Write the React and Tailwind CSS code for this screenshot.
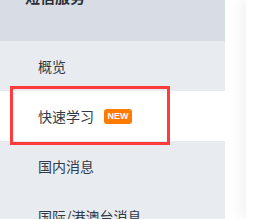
import React from 'react';

const items = [
  { label: '概览' },
  { label: '快速学习', badge: 'NEW', active: true },
  { label: '国内消息' },
  { label: '国际/港澳台消息' },
];

const App = () => {
  return (
    <div
      className="flex h-[219px] w-[279px] overflow-hidden bg-white"
      style={{ fontFamily: '"Noto Sans CJK SC", "Liberation Sans", sans-serif' }}
    >
      {/* Sidebar */}
      <aside className="w-[225px] shrink-0 flex flex-col bg-[#e8ebf0]">
        <div className="h-[41px] shrink-0 overflow-hidden bg-[#d8dde5] px-[25px]">
          <div className="-mt-[14px] text-[15px] font-bold leading-[22px] text-[#2b2f36]">短信服务</div>
        </div>
        <nav className="flex flex-col">
          {items.map((item) => (
            <div
              key={item.label}
              className={`relative h-[50px] shrink-0 flex items-center pl-[38px] text-[14px] text-[#333a44] ${
                item.active ? 'bg-white' : ''
              }`}
            >
              <span>{item.label}</span>
              {item.badge && (
                <span className="ml-[10px] h-[15px] w-[28px] flex items-center justify-center rounded-[3px] bg-[#ff7a00] text-[9px] font-bold leading-none text-white" style={{ fontFamily: '"Liberation Sans", sans-serif' }}>
                  {item.badge}
                </span>
              )}
              {item.active && (
                <div className="absolute left-[10px] top-[-5px] h-[59px] w-[160px] border-[3px] border-[#ff3b3b] pointer-events-none" />
              )}
            </div>
          ))}
        </nav>
      </aside>

      {/* Content */}
      <main className="flex-1 pl-[21px] bg-white">
        <div className="h-full bg-white shadow-[-6px_0_14px_rgba(0,0,0,0.05)]" />
      </main>
    </div>
  );
};

export default App;
